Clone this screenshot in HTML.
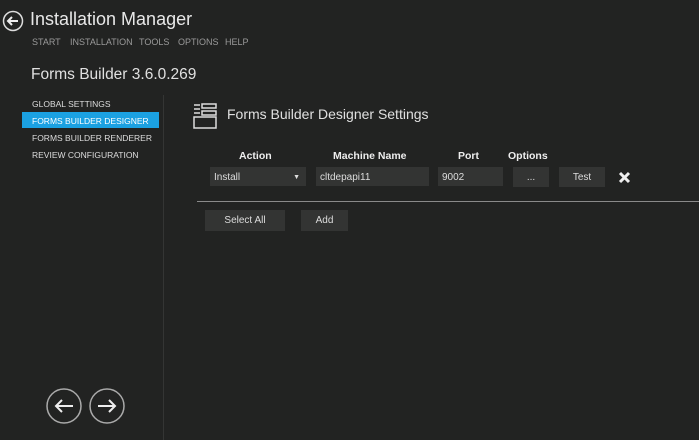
<!DOCTYPE html>
<html><head><style>
body{margin:0;width:699px;height:440px;background:#222322;font-family:"Liberation Sans",sans-serif;color:#ddd;position:relative;overflow:hidden}
.a{position:absolute;white-space:nowrap}
.m{font-size:9px;color:#9a9a9a;top:37px}
.s{font-size:8.5px;color:#ddd;left:32px}
.box{position:absolute;background:#333433;height:19px;top:167px;font-size:10px;color:#ddd;line-height:21px}
.h{font-size:10.5px;font-weight:bold;top:149px;color:#eee}
.btn{position:absolute;background:#333433;font-size:10px;color:#ddd;text-align:center;line-height:22px;height:21px;top:210px}
</style></head><body>
<svg class="a" style="left:0;top:8px" width="28" height="28"><circle cx="13" cy="13" r="9.5" fill="none" stroke="#ddd" stroke-width="1.5"/><path d="M18 13H8M12 9L8 13L12 17" fill="none" stroke="#eee" stroke-width="2"/></svg>
<div class="a" style="left:30px;top:9px;font-size:18px;color:#e8e8e8">Installation Manager</div>
<div class="a m" style="left:32px">START</div>
<div class="a m" style="left:70px">INSTALLATION</div>
<div class="a m" style="left:139px">TOOLS</div>
<div class="a m" style="left:178px">OPTIONS</div>
<div class="a m" style="left:225px">HELP</div>
<div class="a" style="left:31px;top:66px;font-size:15.5px;color:#e0e0e0">Forms Builder 3.6.0.269</div>
<div class="a" style="left:163px;top:95px;width:1px;height:345px;background:#343534"></div>
<div class="a s" style="top:99px">GLOBAL SETTINGS</div>
<div class="a" style="left:22px;top:112px;width:137px;height:16px;background:#1ba1e2"></div>
<div class="a s" style="top:116px;color:#fff">FORMS BUILDER DESIGNER</div>
<div class="a s" style="top:133px">FORMS BUILDER RENDERER</div>
<div class="a s" style="top:150px">REVIEW CONFIGURATION</div>
<svg class="a" style="left:193px;top:103px" width="26" height="26" fill="none" stroke="#ddd" stroke-width="1.5"><path d="M1 2H7M1 6H7M1 10H7M9 1H23V5H9ZM9 8H23V12H9ZM1 14H23V25H1Z"/></svg>
<div class="a" style="left:227px;top:106px;font-size:14px;color:#e0e0e0">Forms Builder Designer Settings</div>
<div class="a h" style="left:239px;top:150px">Action</div>
<div class="a h" style="left:333px;top:150px">Machine Name</div>
<div class="a h" style="left:458px;top:150px">Port</div>
<div class="a h" style="left:508px;top:150px">Options</div>
<div class="box" style="left:210px;width:92px;padding-left:4px">Install<span style="position:absolute;right:6px;font-size:7px">▼</span></div>
<div class="box" style="left:316px;width:109px;padding-left:4px">cltdepapi11</div>
<div class="box" style="left:438px;width:61px;padding-left:4px">9002</div>
<div class="box" style="left:513px;width:36px;text-align:center;height:20px">...</div>
<div class="box" style="left:559px;width:46px;text-align:center;height:20px">Test</div>
<svg class="a" style="left:618px;top:171px" width="13" height="13"><path d="M2 2L11 11M11 2L2 11" stroke="#eee" stroke-width="3"/></svg>
<div class="a" style="left:197px;top:201px;width:502px;height:1px;background:#8a8a8a"></div>
<div class="btn" style="left:205px;width:80px">Select All</div>
<div class="btn" style="left:301px;width:47px">Add</div>
<svg class="a" style="left:45px;top:387px" width="82" height="38" fill="none" stroke="#ccc"><circle cx="19" cy="19" r="17" stroke-width="1.5" stroke="#aaa"/><circle cx="62" cy="19" r="17" stroke-width="1.5" stroke="#aaa"/><path d="M28 19H11M17 13L11 19L17 25M53 19H70M64 13L70 19L64 25" stroke="#eee" stroke-width="2"/></svg>
</body></html>
